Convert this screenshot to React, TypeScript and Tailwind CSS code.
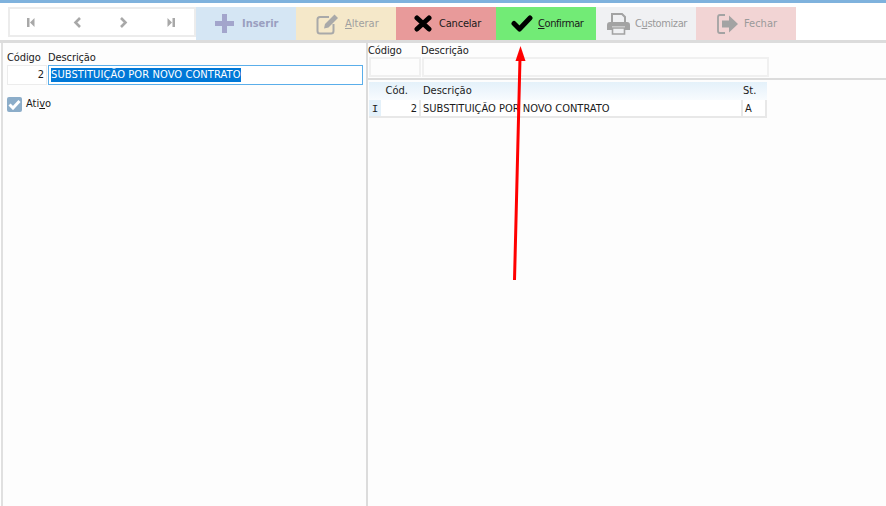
import React from "react";

function First() {
  return (
    <svg width="12" height="12" viewBox="0 0 12 12" className="text-[#a8a8a8]" fill="currentColor">
      <rect x="2" y="2" width="2.5" height="9" />
      <path d="M9.5 2 V11 L5 6.5 Z" />
    </svg>
  );
}

function Last() {
  return (
    <svg width="12" height="12" viewBox="0 0 12 12" className="text-[#a8a8a8]" fill="currentColor">
      <rect x="7.5" y="2" width="2.5" height="9" />
      <path d="M2.5 2 V11 L7 6.5 Z" />
    </svg>
  );
}

function Chevron({ flip }: { flip?: boolean }) {
  return (
    <svg width="12" height="12" viewBox="0 0 12 12" fill="none" stroke="#a8a8a8" strokeWidth="2.6">
      <path d={flip ? "M4 2 L8.5 6.5 L4 11" : "M8 2 L3.5 6.5 L8 11"} />
    </svg>
  );
}

function PlusIcon() {
  return (
    <svg width="19" height="19" viewBox="0 0 19 19" fill="#a3a5cc">
      <path d="M7 0 H12 V7 H19 V12 H12 V19 H7 V12 H0 V7 H7 Z" />
    </svg>
  );
}

function EditIcon() {
  return (
    <svg width="23" height="22" viewBox="0 0 23 22" fill="none">
      <path d="M13 4 H4 Q1.5 4 1.5 6.5 V18 Q1.5 20.5 4 20.5 H15 Q17.5 20.5 17.5 18 V11" stroke="#a9a9a9" strokeWidth="2" />
      <path d="M8 15.5 L9 11 L18.5 1.5 L22 5 L12.5 14.5 Z" fill="#a9a9a9" />
    </svg>
  );
}

function CrossIcon() {
  return (
    <svg width="18" height="17" viewBox="0 0 18 17" fill="none" stroke="#000" strokeWidth="5" strokeLinecap="round">
      <path d="M3 3 L15 14 M15 3 L3 14" />
    </svg>
  );
}

function CheckIcon() {
  return (
    <svg width="22" height="17" viewBox="0 0 22 17" fill="none" stroke="#000" strokeWidth="5" strokeLinecap="round" strokeLinejoin="round">
      <path d="M3 8.5 L8.5 14 L19 3" />
    </svg>
  );
}

function PrinterIcon() {
  return (
    <svg width="23" height="22" viewBox="0 0 23 22">
      <path d="M5 9 V1 H15 L18 4 V9" fill="none" stroke="#a3a3a3" strokeWidth="2" />
      <path d="M3 9 H20 Q23 9 23 12 V17 H18 V13.5 H5 V17 H0 V12 Q0 9 3 9 Z" fill="#a3a3a3" />
      <path d="M5.5 15 H17.5 V21 H5.5 Z" fill="none" stroke="#a3a3a3" strokeWidth="1.6" />
    </svg>
  );
}

function ExitIcon() {
  return (
    <svg width="21" height="20" viewBox="0 0 21 20">
      <path d="M8 1 H3 Q1 1 1 3 V17 Q1 19 3 19 H8" fill="none" stroke="#a3a3a3" strokeWidth="1.8" />
      <path d="M5 6.5 H12 V1.5 L21 10 L12 18.5 V13.5 H5 Z" fill="#a3a3a3" />
    </svg>
  );
}

function Arrow() {
  return (
    <svg className="absolute left-[505px] top-[40px]" width="30" height="245" viewBox="0 0 30 245">
      <path d="M9.5 240 L11 180 L15 18" stroke="#ff0000" strokeWidth="3" fill="none" />
      <path d="M15.5 6 L20.5 21 L10.5 21 Z" fill="#ff0000" />
    </svg>
  );
}

export default function App() {
  return (
    <div className="relative w-[886px] h-[506px] overflow-hidden bg-white text-[11px] text-[#1a1a1a] font-['DejaVu_Sans_Condensed','Liberation_Sans',sans-serif]">
      <div className="h-[3px] bg-[#7fb2dd]" />
      <div className="h-[37px] pt-[4px] pl-[8px] flex bg-white">
        <div className="h-[30px] w-[188px] flex items-center border-2 border-[#ececec] bg-white">
          <span className="ml-[15px] flex"><First /></span>
          <span className="ml-[35px] flex"><Chevron /></span>
          <span className="ml-[33px] flex"><Chevron flip /></span>
          <span className="ml-[36px] flex"><Last /></span>
        </div>
        <div className="w-[100px] h-full flex items-center pl-[19px] gap-[8px] bg-[#d5e6f4] text-[#9a9fc0] font-bold"><PlusIcon /><span className="pt-[1px]">Inserir</span></div>
        <div className="w-[100px] h-full flex items-center pl-[20px] gap-[6px] bg-[#f5e8c9] text-[#a0a0a0]"><EditIcon /><span className="pt-[1px]"><u>A</u>lterar</span></div>
        <div className="w-[100px] h-full flex items-center pl-[18px] gap-[7px] bg-[#e89a9a]"><CrossIcon /><span className="pt-[1px] tracking-[-0.2px]">Cancelar</span></div>
        <div className="w-[100px] h-full flex items-center pl-[15px] gap-[5px] bg-[#72eb76]"><CheckIcon /><span className="pt-[1px] tracking-[-0.4px]"><u>C</u>onfirmar</span></div>
        <div className="w-[100px] h-full flex items-center pl-[11px] gap-[5px] bg-[#f0f1f3] text-[#9a9a9a]"><PrinterIcon /><span className="pt-[1px] tracking-[-0.4px]">C<u>u</u>stomizar</span></div>
        <div className="w-[100px] h-full flex items-center pl-[21px] gap-[6px] bg-[#f2d4d4] text-[#9a9a9a]"><ExitIcon /><span className="pt-[1px]">Fechar</span></div>
      </div>
      <div className="h-[3px] bg-[#dcdcdc]" />
      <div className="flex h-[463px]">
        <div className="w-[366px] ml-[1px] border-l-[2px] border-[#e0e0e0] pl-[4px] pt-[8px] bg-[#fdfdfd]">
          <div className="flex h-[14px] items-center tracking-[-0.1px]"><span className="w-[41px]">Código</span><span>Descrição</span></div>
          <div className="flex h-[20px]">
            <div className="w-[40px] border border-[#ececec] bg-white text-right pr-[2px] leading-[18px]">2</div>
            <div className="w-[315px] ml-[1px] border border-[#5aaeea] bg-white pl-[2px] flex items-center">
              <span className="bg-[#0078d7] text-white leading-[14px] tracking-[0.1px]">SUBSTITUIÇÃO POR NOVO CONTRATO</span>
            </div>
          </div>
          <div className="flex items-center gap-[4px] mt-[11px]">
            <span className="w-[15px] h-[15px] rounded-[2px] bg-[#8cadc9] flex items-center justify-center">
              <svg width="13" height="11" viewBox="0 0 13 11" fill="none" stroke="#fff" strokeWidth="3"><path d="M1.5 5.5 L5 9 L11.5 2" /></svg>
            </span>
            <span>Ati<u>v</u>o</span>
          </div>
        </div>
        <div className="w-[2px] bg-[#dcdcdc] -ml-[1px]" />
        <div className="flex-1 bg-[#fdfdfd]">
          <div className="h-[35px] pt-[2px]">
            <div className="flex h-[12px] items-center tracking-[-0.1px]"><span className="w-[53px]">Código</span><span>Descrição</span></div>
            <div className="flex h-[20px] ml-[1px] gap-[1px]">
              <div className="w-[52px] border-2 border-[#f0f0f0]" />
              <div className="w-[347px] border-2 border-[#f0f0f0]" />
            </div>
          </div>
          <div className="h-[2px] bg-[#dcdcdc]" />
          <div className="w-[398px] ml-[1px] mt-[2px] bg-white">
            <div className="flex h-[18px] items-center bg-gradient-to-b from-[#e4f1fa] to-[#f8fbfe]">
              <span className="w-[39px] text-right">Cód.</span>
              <span className="flex-1 pl-[15px]">Descrição</span>
              <span className="w-[26px] pl-[2px]">St.</span>
            </div>
            <div className="flex h-[18px] leading-[18px] border-b-2 border-[#e8e8e8]">
              <span className="w-[12px] h-full bg-[#e4f1fa] text-center font-['Liberation_Mono',monospace]">I</span>
              <span className="w-[40px] text-right pr-[2px] border-r-2 border-[#e8e8e8] h-full">2</span>
              <span className="flex-1 pl-[2px]">SUBSTITUIÇÃO POR NOVO CONTRATO</span>
              <span className="w-[26px] pl-[2px] border-l-2 border-r-2 border-[#e8e8e8] h-full">A</span>
            </div>
          </div>
        </div>
      </div>
      <Arrow />
    </div>
  );
}
